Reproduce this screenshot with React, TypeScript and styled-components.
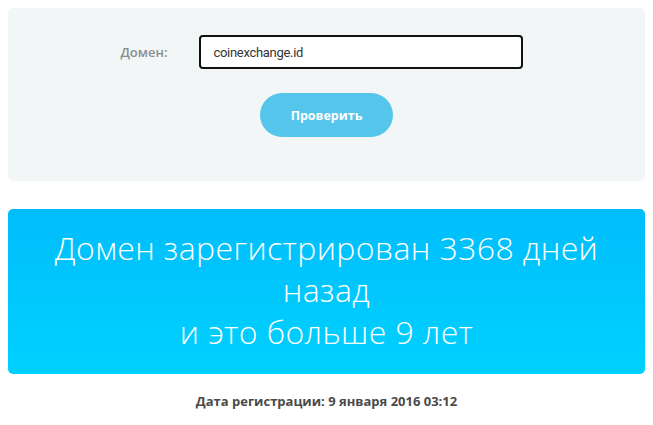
import React, { useState } from 'react';
import styled, { createGlobalStyle } from 'styled-components';

const GlobalStyle = createGlobalStyle`
  body {
    margin: 0;
    background: #ffffff;
    font-family: "Open Sans", "Noto Sans", sans-serif;
  }
`;

const Page = styled.div`
  padding: 8px;
  display: flex;
  flex-direction: column;
`;

const Panel = styled.form`
  background-color: #f3f6f7;
  border-radius: 5px;
  height: 173px;
  box-sizing: border-box;
  padding-top: 27px;
  display: flex;
  flex-direction: column;
  align-items: center;
`;

const Row = styled.div`
  display: flex;
  align-items: center;
  margin-left: -23px;
`;

const Label = styled.label`
  width: 60px;
  margin-right: 31px;
  text-align: right;
  font-size: 13px;
  font-weight: 600;
  color: #8a8d90;
`;

const Input = styled.input`
  width: 324px;
  height: 34px;
  box-sizing: border-box;
  border: 2px solid #111;
  border-radius: 4px;
  padding: 0 13px;
  font-family: Roboto, "Open Sans", sans-serif;
  font-size: 13px;
  letter-spacing: -0.3px;
  color: #333;
  background: #fff;
  outline: none;
`;

const Button = styled.button`
  margin-top: 24px;
  width: 133px;
  height: 44px;
  border: none;
  border-radius: 22px;
  background-color: #56c5ec;
  color: #fff;
  font-family: "Open Sans", sans-serif;
  font-size: 12.5px;
  font-weight: 700;
  cursor: pointer;
`;

const Result = styled.div`
  margin-top: 28px;
  height: 165px;
  box-sizing: border-box;
  border-radius: 5px;
  background: linear-gradient(180deg, #00bdfc 0%, #00d1fe 100%);
  color: #fff;
  display: flex;
  align-items: center;
  justify-content: center;
  text-align: center;
  padding: 0 40px 4px;
`;

const ResultText = styled.p`
  margin: 0;
  font-size: 32px;
  font-weight: 300;
  letter-spacing: 0.4px;
  line-height: 42px;
`;

const RegDate = styled.p`
  margin: 18px 0 0;
  text-align: center;
  font-size: 13px;
  font-weight: 700;
  color: #4a4a4a;
`;

export default function App() {
  const [domain, setDomain] = useState('coinexchange.id');

  return (
    <>
      <GlobalStyle />
      <Page>
        <Panel onSubmit={(e) => e.preventDefault()}>
          <Row>
            <Label htmlFor="domain">Домен:</Label>
            <Input id="domain" value={domain} onChange={(e) => setDomain(e.target.value)} />
          </Row>
          <Button type="submit">Проверить</Button>
        </Panel>
        <Result>
          <ResultText>
            Домен зарегистрирован 3368 дней назад
            <br />
            и это больше 9 лет
          </ResultText>
        </Result>
        <RegDate>Дата регистрации: 9 января 2016 03:12</RegDate>
      </Page>
    </>
  );
}
